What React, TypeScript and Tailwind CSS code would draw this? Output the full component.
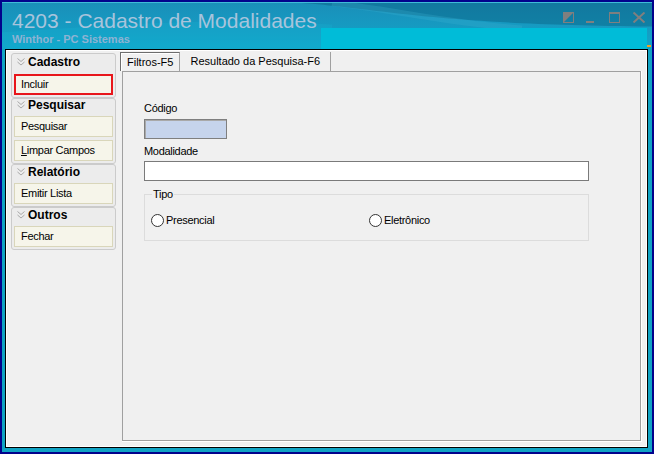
import React from 'react';

type Action = { label: React.ReactNode; active?: boolean };

const sections: { title: string; actions: Action[] }[] = [
  { title: 'Cadastro', actions: [{ label: 'Incluir', active: true }] },
  {
    title: 'Pesquisar',
    actions: [
      { label: 'Pesquisar' },
      {
        label: (
          <>
            <span className="underline">L</span>impar Campos
          </>
        ),
      },
    ],
  },
  { title: 'Relatório', actions: [{ label: 'Emitir Lista' }] },
  { title: 'Outros', actions: [{ label: 'Fechar' }] },
];

function Chevrons() {
  return (
    <svg width="8" height="8" viewBox="0 0 8 8" className="shrink-0">
      <polyline points="0.5,0.5 4,3.5 7.5,0.5" fill="none" stroke="#a9a9a9" strokeWidth="1" />
      <polyline points="0.5,4 4,7 7.5,4" fill="none" stroke="#a9a9a9" strokeWidth="1" />
    </svg>
  );
}

function WindowControls() {
  return (
    <div className="flex items-start pr-[5px] pt-[9px]">
      <svg width="11" height="11" viewBox="0 0 11 11">
        <rect x="0.5" y="0.5" width="10" height="10" fill="none" stroke="#7f7f7f" />
        <polygon points="0,0 11,0 0,11" fill="#7f7f7f" />
      </svg>
      <svg width="8" height="11" viewBox="0 0 8 11" className="ml-[12px]">
        <rect x="0" y="9" width="8" height="2" fill="#7f7f7f" />
      </svg>
      <svg width="11" height="11" viewBox="0 0 11 11" className="ml-[15px]">
        <rect x="0.5" y="0.5" width="10" height="10" fill="none" stroke="#7f7f7f" />
        <rect x="0" y="0" width="11" height="2" fill="#7f7f7f" />
      </svg>
      <svg width="14" height="11" viewBox="0 0 14 11" className="ml-[12px]">
        <path d="M1.5 0.5 L12.5 10.5 M12.5 0.5 L1.5 10.5" stroke="#7f7f7f" strokeWidth="2" />
      </svg>
    </div>
  );
}

function TitleBar() {
  return (
    <div className="relative flex h-[47px] border-t border-[#3fbbd8] bg-gradient-to-b from-[#1a8fb9] to-[#0fa6ca]">
      <svg
        className="absolute inset-0 h-full w-full"
        viewBox="0 0 650 47"
        preserveAspectRatio="none"
      >
        <path d="M300 0 C 380 6, 430 22, 650 24 L650 0 Z" fill="#05506f" opacity="0.35" />
        <path d="M330 0 C 400 8, 440 20, 520 26" fill="none" stroke="#3fb3d3" strokeWidth="6" opacity="0.25" />
        <path d="M0 30 C 120 22, 220 14, 330 22 L330 47 L0 47 Z" fill="#19b2d4" opacity="0.25" />
      </svg>
      <div className="relative flex-1 pl-[10px] pt-[6px]">
        <div className="text-[21px] leading-[24px] text-[#a8c4dc]">4203 - Cadastro de Modalidades</div>
        <div className="text-[11px] font-bold leading-[13px] text-[#8db3d3]">Winthor - PC Sistemas</div>
      </div>
      <div className="relative mr-[1px] flex w-[330px] flex-col justify-between">
        <div className="flex justify-end">
          <WindowControls />
        </div>
        <div className="flex items-end">
          <div className="h-[21px] w-[326px] bg-[#00bcd8]" />
          <div className="mb-[2px] h-[2px] w-[4px] bg-[#f2a31b]" />
        </div>
      </div>
    </div>
  );
}

// header height and text lift per section of the action bar
const headerClass = [
  'flex h-[20px] items-center gap-[3px] pb-[5px] pl-[3px]',
  'flex h-[17px] items-center gap-[3px] pb-[5px] pl-[3px]',
  'flex h-[18px] items-center gap-[3px] pb-[5px] pl-[3px]',
  'flex h-[18px] items-center gap-[3px] pb-[4px] pl-[3px]',
];

function SidePanel() {
  return (
    <div className="mt-[1px] flex w-[105px] shrink-0 flex-col">
      {sections.map((s, idx) => (
        <div key={s.title} className="rounded-[3px] border border-[#cbcbcb] bg-[#ececec] px-[2px] pb-[2px]">
          <div className={headerClass[idx]}>
            <Chevrons />
            <span className="text-[12px] font-bold leading-[14px] text-black">{s.title}</span>
          </div>
          <div className="flex flex-col gap-[3px]">
            {s.actions.map((a, i) => (
              <div
                key={i}
                className={
                  a.active
                    ? 'flex h-[21px] items-center border-2 border-[#e8161b] bg-[#f6f5ea] pl-[5px] text-[11px] tracking-[-0.3px] text-black'
                    : 'flex h-[21px] items-center border border-[#d9d6ba] bg-[#f6f5ea] pl-[6px] text-[11px] tracking-[-0.3px] text-black'
                }
              >
                {a.label}
              </div>
            ))}
          </div>
        </div>
      ))}
    </div>
  );
}

function Radio({ label }: { label: string }) {
  return (
    <div className="flex items-center gap-[2px]">
      <span className="h-[13px] w-[13px] rounded-full border border-[#333333] bg-white" />
      <span className="text-[11px] tracking-[-0.3px] text-black">{label}</span>
    </div>
  );
}

function FilterForm() {
  return (
    <div className="flex w-[445px] flex-col text-[11px] tracking-[-0.3px] text-black">
      <div className="mt-[1px] h-[13px] leading-[13px]">Código</div>
      <div className="mt-[4px] h-[20px] w-[83px] border border-[#7f7f7f] bg-[#c6d4ec] shadow-[inset_1px_1px_0_#a9a9a9]" />
      <div className="mt-[6px] h-[13px] leading-[13px]">Modalidade</div>
      <div className="mt-[3px] h-[20px] w-full border border-[#7a7a7a] bg-white" />
      <fieldset className="mt-[7px] border border-[#dcdcdc] pb-[11px]">
        <legend className="ml-[7px] px-[1px] leading-[13px]">Tipo</legend>
        <div className="mt-[11px] flex pl-[6px]">
          <div className="w-[218px]">
            <Radio label="Presencial" />
          </div>
          <Radio label="Eletrônico" />
        </div>
      </fieldset>
    </div>
  );
}

function TabArea() {
  return (
    <div className="flex flex-1 flex-col">
      <div className="flex h-[19px] text-[11px] text-black">
        <div className="flex items-center border-l border-t border-r border-l-[#6d6d6d] border-t-[#6d6d6d] border-r-[#a0a0a0] bg-[#f0f0f0] px-[6px] shadow-[inset_1px_1px_0_#ffffff]">
          Filtros-F5
        </div>
        <div className="flex items-center border-r border-[#a0a0a0] px-[10px]">Resultado da Pesquisa-F6</div>
      </div>
      <div className="ml-[2px] mr-[4px] flex flex-1 border-b border-r border-white">
        <div className="flex-1 border border-[#a0a0a0] bg-[#f0f0f0] pl-[21px] pt-[29px]">
          <FilterForm />
        </div>
      </div>
    </div>
  );
}

export default function App() {
  return (
    <div className="flex h-[454px] w-[654px] flex-col bg-[#02028c] p-[2px] font-['Liberation_Sans',Arial,sans-serif]">
      <div className="flex flex-1 flex-col bg-[#10a3c4]">
        <TitleBar />
        <div className="flex flex-1 flex-col pb-[4px] pl-[3px] pr-[4px]">
          <div className="flex flex-1 flex-col border border-black">
            <div className="flex flex-1 items-stretch gap-[4px] border border-white bg-[#f0f0f0] pb-[4px] pl-[4px] pt-[1px]">
              <div className="flex items-start">
                <SidePanel />
              </div>
              <TabArea />
            </div>
          </div>
        </div>
      </div>
    </div>
  );
}
